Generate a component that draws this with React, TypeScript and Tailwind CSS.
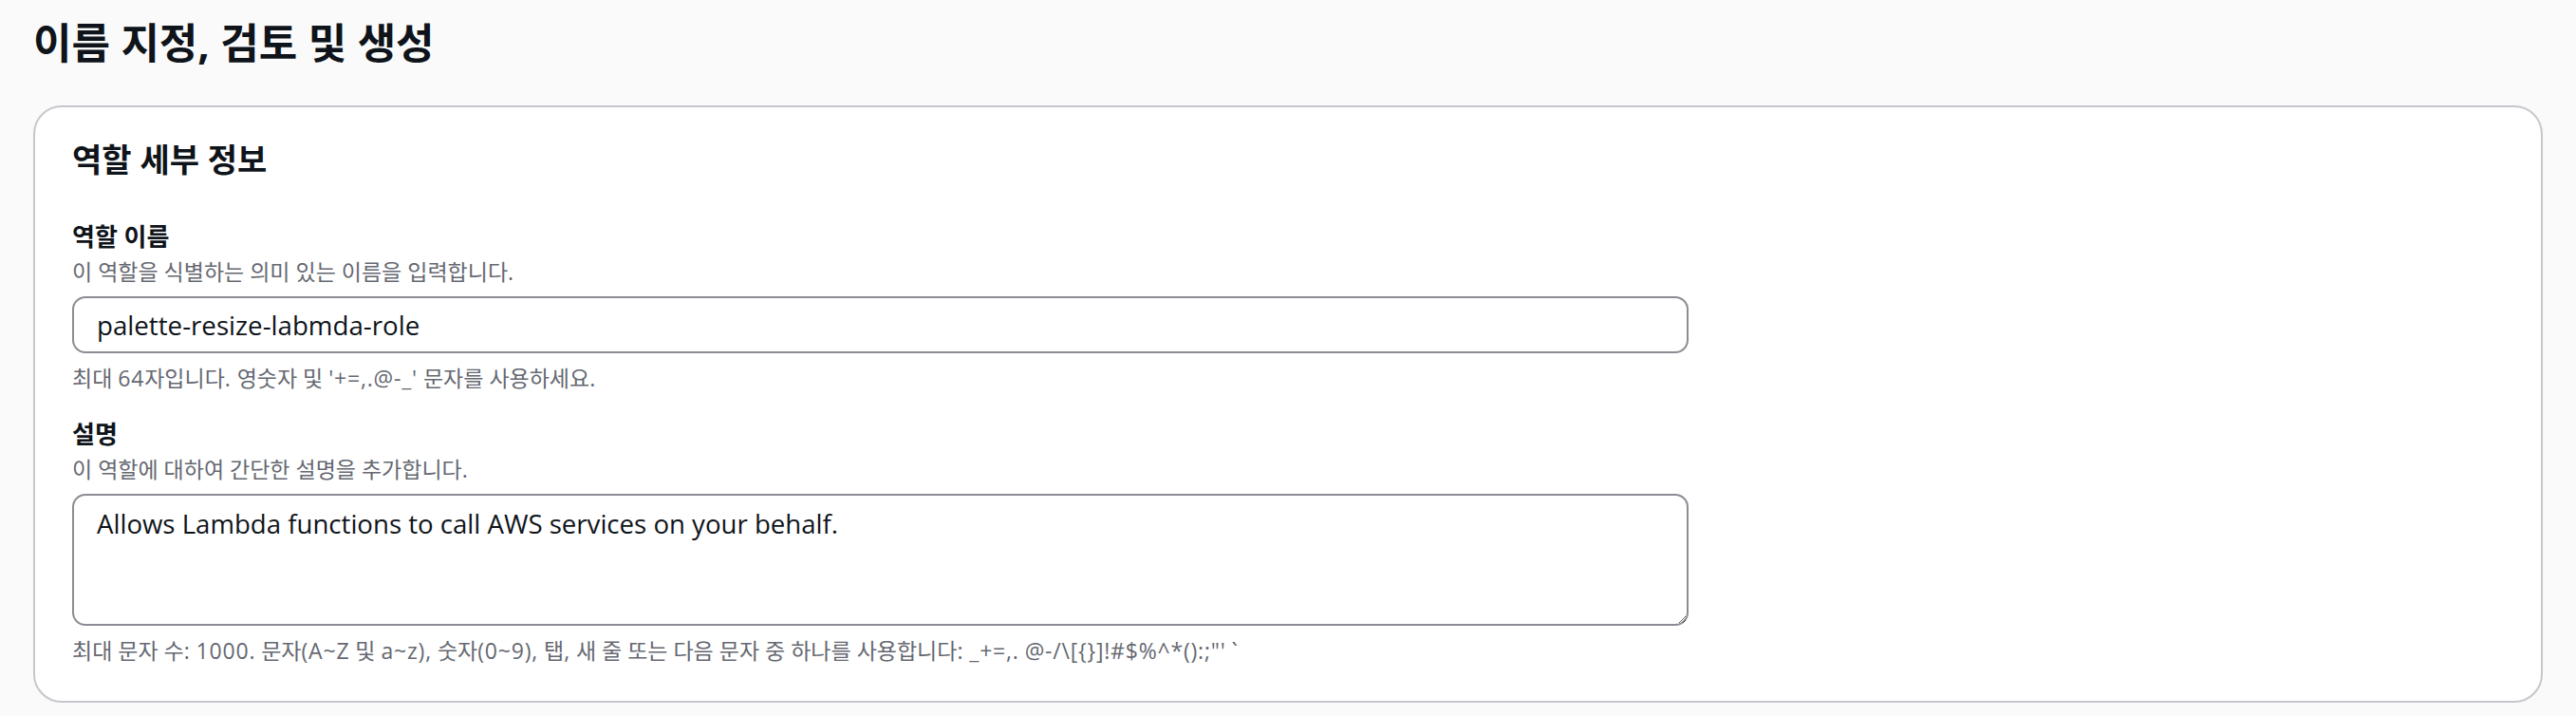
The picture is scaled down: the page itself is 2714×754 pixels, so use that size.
import * as React from "react";

const font = "font-['Open_Sans','Noto_Sans_CJK_KR',sans-serif]";

// Latin runs sit a touch wider than Hangul in the original
const Mixed: React.FC<{ text: string }> = ({ text }) => (
  <>
    {text.split(/([^\uAC00-\uD7A3\s]+)/).map((part, i) =>
      i % 2 === 1 ? (
        <span key={i} className="tracking-[0.8px]">
          {part}
        </span>
      ) : (
        <React.Fragment key={i}>{part}</React.Fragment>
      )
    )}
  </>
);

const Field: React.FC<{
  label: string;
  description: string;
  constraint: string;
  children: React.ReactNode;
  className?: string;
}> = ({ label, description, constraint, children, className }) => {
  return (
    <div className={className}>
      <div className="text-[26px] leading-[34px] font-bold text-[#0f141a]">{label}</div>
      <div className="mt-[4px] text-[23px] leading-[32px] text-[#656871]">{description}</div>
      <div className="mt-[10px]">{children}</div>
      <div className="mt-[10px] text-[23px] leading-[32px] text-[#656871]">
        <Mixed text={constraint} />
      </div>
    </div>
  );
};

const App: React.FC = () => {
  return (
    <div className={`min-h-[754px] w-[2714px] bg-[#fafafa] px-[35px] pt-[20px] ${font}`}>
      <h1 className="text-[44px] leading-[50px] font-bold text-[#0f141a]">이름 지정, 검토 및 생성</h1>

      <div className="mt-[41px] rounded-[30px] border-2 border-[#c6c6cd] bg-white px-[39px] pt-[33px] pb-[37px]">
        <h2 className="text-[34px] leading-[44px] font-bold text-[#0f141a]">역할 세부 정보</h2>

        {/* Role name */}
        <Field
          className="mt-[42px]"
          label="역할 이름"
          description="이 역할을 식별하는 의미 있는 이름을 입력합니다."
          constraint="최대 64자입니다. 영숫자 및 '+=,.@-_' 문자를 사용하세요."
        >
          <input
            readOnly
            value="palette-resize-labmda-role"
            className={`block h-[60px] w-[1703px] rounded-[14px] border-2 border-[#8c8c94] bg-white px-[24px] text-[27.7px] text-[#0f141a] outline-none ${font}`}
          />
        </Field>

        {/* Description */}
        <Field
          className="mt-[26px]"
          label="설명"
          description="이 역할에 대하여 간단한 설명을 추가합니다."
          constraint={"최대 문자 수: 1000. 문자(A~Z 및 a~z), 숫자(0~9), 탭, 새 줄 또는 다음 문자 중 하나를 사용합니다: _+=,. @-/\\[{}]!#$%^*():;\"' `"}
        >
          <textarea
            readOnly
            value="Allows Lambda functions to call AWS services on your behalf."
            className={`block h-[139px] w-[1703px] resize-y rounded-[14px] border-2 border-[#8c8c94] bg-white px-[24px] pt-[11px] text-[27.6px] leading-[36px] text-[#0f141a] outline-none ${font}`}
          />
        </Field>
      </div>
    </div>
  );
};

export default App;
